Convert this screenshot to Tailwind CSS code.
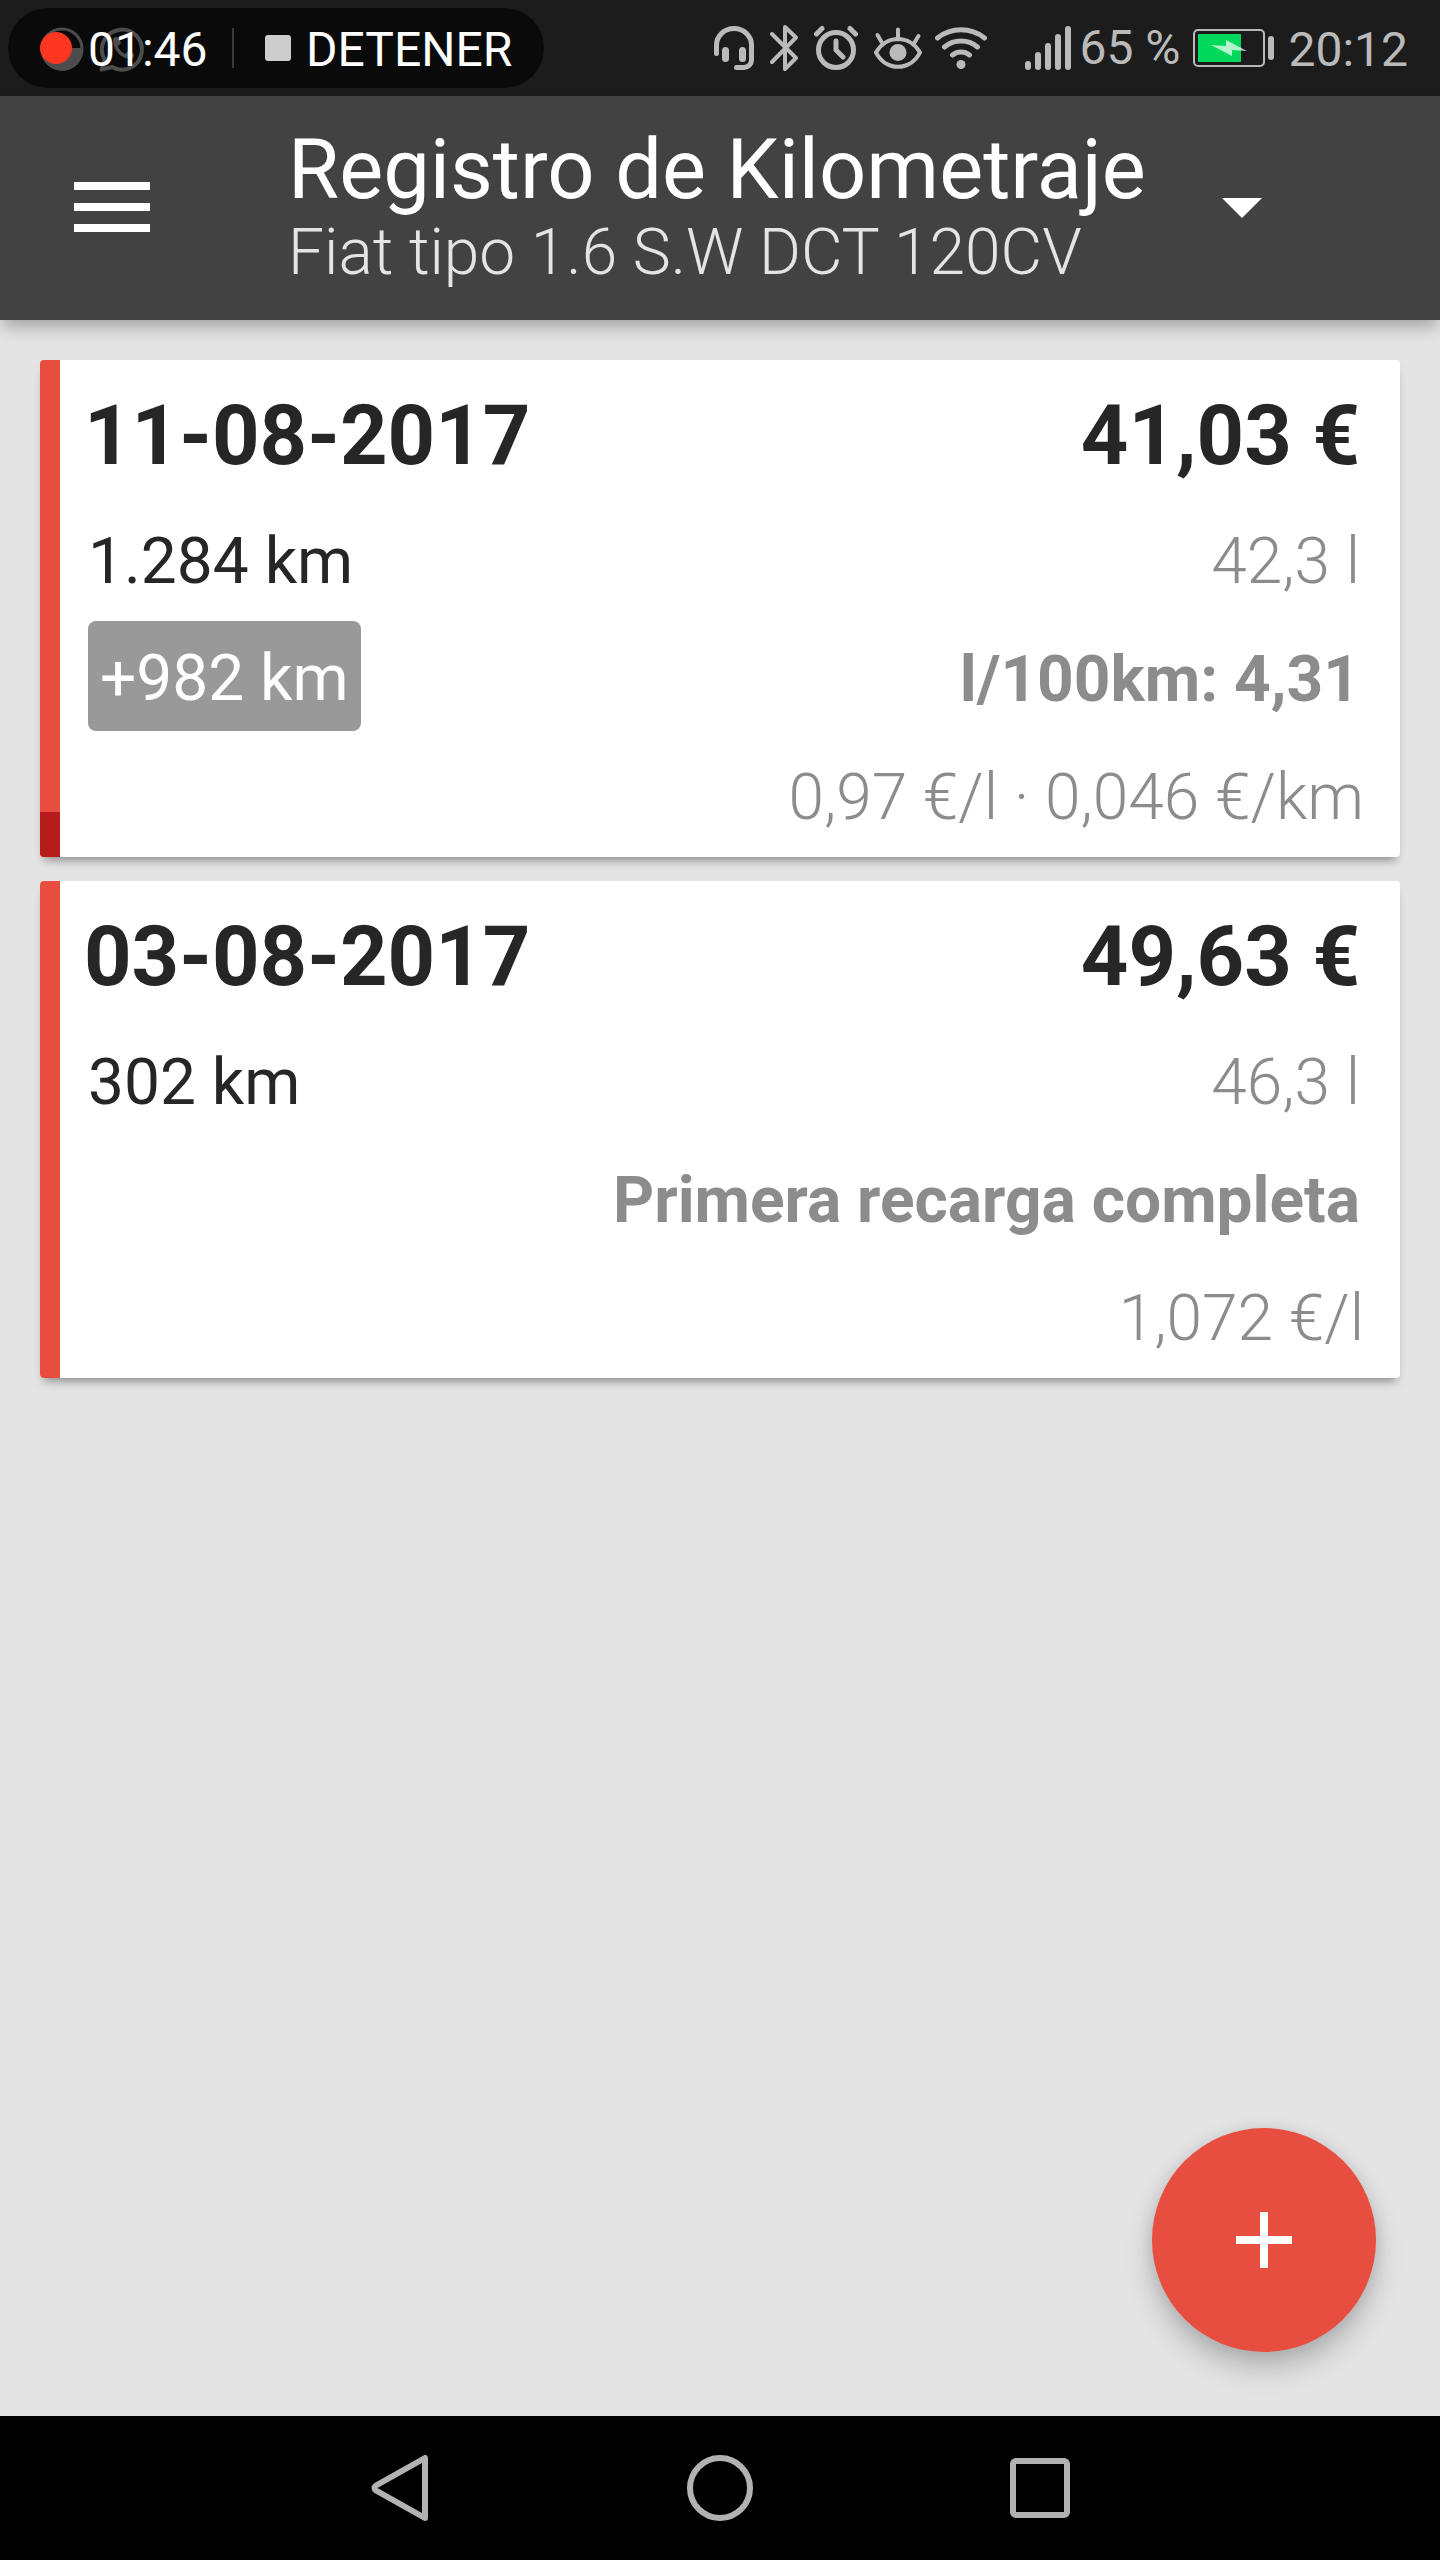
<!DOCTYPE html>
<html lang="es">
<head>
<meta charset="utf-8">
<meta name="viewport" content="width=device-width, initial-scale=1">
<title>Registro de Kilometraje</title>
<script src="https://cdn.jsdelivr.net/npm/@tailwindcss/browser@4"></script>
</head>
<body class="flex min-h-screen flex-col bg-[#e4e4e4] font-['Roboto',sans-serif]">

<!-- System status bar -->
<div class="flex h-24 items-center bg-[#1c1c1c] pr-8 pl-2 text-5xl leading-[56px] text-[#bababa]">
  <div class="relative flex h-20 w-[536px] items-center rounded-full bg-[#0a0a0a] pl-8 text-white">
    <svg class="absolute top-4 left-8 h-12 w-28" viewBox="40 24 112 48" aria-hidden="true">
      <circle cx="62" cy="49" r="20" fill="none" stroke="#4c4c4c" stroke-width="3"/>
      <path d="M62 48h21a21 21 0 0 1-38 14z" fill="#4c4c4c"/>
      <circle cx="56" cy="48" r="16" fill="#ff3621"/>
      <path d="M101.500 69.500l3-10a20 20 0 1 1 7.500 7.500z" fill="none" stroke="#4c4c4c" stroke-width="4" stroke-linejoin="round"/>
      <path d="M113 40c0 10 8 19 18 19 3 0 4-4 2-6l-5-2-3 3c-3-1-6-5-7-8l3-3-2-5c-3-2-6-1-6 2z" fill="#4c4c4c"/>
    </svg>
    <span class="relative w-[119px] pt-1 pl-12">01:46</span>
    <span class="ml-[73px] h-10 w-0.5 bg-[#3a3a3a]"></span>
    <button type="button" class="ml-[31px] flex items-center gap-[15px]">
      <span class="size-[26px] rounded-[3px] bg-[#ccc]"></span>
      <span class="pt-1">DETENER</span>
    </button>
  </div>
  <div class="ml-auto flex items-center">
    <svg class="h-12 w-10" viewBox="714 24 40 48" fill="none" stroke="#bababa" stroke-linecap="round" aria-hidden="true">
      <path d="M716.500 53.500V45a17.500 16.500 0 0 1 35 0V60a7.500 7.500 0 0 1-7.500 7.500h-7.500" stroke-width="5"/>
      <path d="M725.500 50.500v8M742.500 50.500v8" stroke-width="7"/>
    </svg>
    <svg class="ml-4 h-12 w-7" viewBox="770 24 28 48" fill="none" stroke="#bababa" stroke-width="4" stroke-linecap="round" stroke-linejoin="round" aria-hidden="true">
      <path d="M772 34l24 24-11 11V27l11 10.500L772 62"/>
    </svg>
    <svg class="ml-4 h-12 w-11" viewBox="814 24 44 48" fill="none" stroke="#bababa" stroke-width="5" stroke-linecap="round" stroke-linejoin="round" aria-hidden="true">
      <circle cx="836" cy="50" r="17.500"/>
      <path d="M816.500 34l5.500-5.500M855.500 34l-5.500-5.500M836 41v9l7 7"/>
    </svg>
    <svg class="ml-4 h-12 w-12" viewBox="874 24 48 48" fill="none" stroke="#bababa" stroke-width="4" stroke-linecap="round" stroke-linejoin="round" aria-hidden="true">
      <path d="M876 52.500c10-18 34-18 44 0-10 19-34 19-44 0z"/>
      <circle cx="898" cy="52.500" r="8.500" fill="#bababa" stroke="none"/>
      <path d="M898 29.500v10M877.500 35l4 7M918.500 36l-4 6.500"/>
    </svg>
    <svg class="ml-[13px] h-12 w-[52px]" viewBox="935 24 52 48" fill="none" stroke="#bababa" stroke-width="5" stroke-linecap="round" aria-hidden="true">
      <path d="M937.500 38a38 38 0 0 1 47 0M944.500 47a26 26 0 0 1 33 0M952.500 55a14 14 0 0 1 17 0"/>
      <circle cx="961" cy="64.500" r="4.500" fill="#bababa" stroke="none"/>
    </svg>
    <svg class="ml-[38px] h-12 w-[46px]" viewBox="1025 24 46 48" fill="#bababa" aria-hidden="true">
      <rect x="1025" y="61" width="6" height="9" rx="3"/><rect x="1035" y="52" width="6" height="18" rx="3"/><rect x="1045" y="43" width="6" height="27" rx="3"/><rect x="1055" y="34" width="6" height="36" rx="3"/><rect x="1065" y="26" width="6" height="44" rx="3"/>
    </svg>
    <span class="ml-2 w-[114px] whitespace-nowrap">65 %</span>
    <svg class="h-12 w-[81px]" viewBox="1193 24 81 48" aria-hidden="true">
      <rect x="1194" y="30" width="70" height="36" rx="4" fill="none" stroke="#bababa" stroke-width="2"/>
      <rect x="1198" y="34" width="43" height="28" rx="1" fill="#00d95c"/>
      <path d="M1211 45l15 1v-6l21 11-15-1v6z" fill="#fff" fill-opacity=".7"/>
      <rect x="1268" y="36" width="6" height="24" rx="3" fill="#bababa"/>
    </svg>
    <span class="ml-[14px] pt-1">20:12</span>
  </div>
</div>

<!-- App bar -->
<header class="relative z-10 flex h-56 items-center bg-[#424242] pl-[74px] text-white shadow-[0_8px_16px_-2px_rgba(0,0,0,0.3)]">
  <button type="button" aria-label="Abrir menú" class="flex flex-col gap-[13px] pb-0.5">
    <span class="h-2 w-[76px] bg-white"></span>
    <span class="h-2 w-[76px] bg-white"></span>
    <span class="h-2 w-[76px] bg-white"></span>
  </button>
  <button type="button" aria-haspopup="listbox" class="ml-[138px] flex items-center gap-[76px] text-left">
    <span class="flex flex-col pb-1">
      <span class="text-[83px] leading-[94px]">Registro de Kilometraje</span>
      <span class="text-[64px] leading-[72px] font-light text-[#e4e4e4]">Fiat tipo 1.6 S.W DCT 120CV</span>
    </span>
    <svg class="h-5 w-10" viewBox="0 0 40 20" fill="#fff" aria-hidden="true"><path d="M0 0h40L20 20z"/></svg>
  </button>
</header>

<!-- Refuelling log -->
<main class="relative flex-1 px-10 pt-10 pb-40">
  <ul class="flex flex-col gap-6">
    <li class="flex rounded-sm bg-white text-[64px] leading-[118px] text-[#262626] shadow-[0_7px_9px_-4px_rgba(0,0,0,0.4)]">
      <div class="flex w-5 shrink-0 flex-col justify-end overflow-hidden rounded-l-sm bg-[#e74e40]">
        <span class="h-[45px] bg-[#b71c1c]"></span>
      </div>
      <div class="flex-1 pt-[9px] pr-9 pl-6">
        <div class="flex justify-between pr-1 text-[83px] leading-[134px] font-bold">
          <h2>11-08-2017</h2><p>41,03 €</p>
        </div>
        <div class="flex justify-between pr-1 pl-1">
          <p>1.284 km</p><p class="font-light text-[#8c8c8c]">42,3 l</p>
        </div>
        <div class="flex items-start justify-between pr-1 pl-1">
          <p class="rounded-lg bg-[#999] px-3 pt-1.5 leading-[104px] text-white">+982 km</p>
          <p class="font-bold text-[#8c8c8c]">l/100km: 4,31</p>
        </div>
        <p class="text-right font-light text-[#8c8c8c]">0,97 €/l · 0,046 €/km</p>
      </div>
    </li>
    <li class="flex rounded-sm bg-white text-[64px] leading-[118px] text-[#262626] shadow-[0_7px_9px_-4px_rgba(0,0,0,0.4)]">
      <div class="w-5 shrink-0 rounded-l-sm bg-[#e74e40]"></div>
      <div class="flex-1 pt-[9px] pr-9 pl-6">
        <div class="flex justify-between pr-1 text-[83px] leading-[134px] font-bold">
          <h2>03-08-2017</h2><p>49,63 €</p>
        </div>
        <div class="flex justify-between pr-1 pl-1">
          <p>302 km</p><p class="font-light text-[#8c8c8c]">46,3 l</p>
        </div>
        <p class="pr-1 text-right font-bold text-[#8c8c8c]">Primera recarga completa</p>
        <p class="text-right font-light text-[#8c8c8c]">1,072 €/l</p>
      </div>
    </li>
  </ul>

  <button type="button" aria-label="Añadir recarga" class="absolute right-16 bottom-16 flex size-56 items-center justify-center rounded-full bg-[#e74e40] shadow-[0_16px_28px_rgba(0,0,0,0.22),0_0_16px_rgba(0,0,0,0.08)]">
    <svg class="size-14" viewBox="0 0 56 56" fill="none" stroke="#fff" stroke-width="8" aria-hidden="true"><path d="M28 0v56M0 28h56"/></svg>
  </button>
</main>

<!-- System navigation bar -->
<nav class="flex h-36 items-center justify-center gap-[248px] bg-black" aria-label="Sistema">
  <button type="button" aria-label="Atrás">
    <svg class="size-[72px]" viewBox="0 0 72 72" fill="none" stroke="#b2b2b2" stroke-width="6" stroke-linejoin="round" aria-hidden="true"><path d="M61 6v60L12 38.500q-3-2.500 0-5z"/></svg>
  </button>
  <button type="button" aria-label="Inicio">
    <svg class="size-[72px]" viewBox="0 0 72 72" fill="none" stroke="#b2b2b2" stroke-width="6" aria-hidden="true"><circle cx="36" cy="36" r="30"/></svg>
  </button>
  <button type="button" aria-label="Recientes">
    <svg class="size-[72px]" viewBox="0 0 72 72" fill="none" stroke="#b2b2b2" stroke-width="6" aria-hidden="true"><rect x="9" y="9" width="54" height="54" rx="3"/></svg>
  </button>
</nav>
</body>
</html>
